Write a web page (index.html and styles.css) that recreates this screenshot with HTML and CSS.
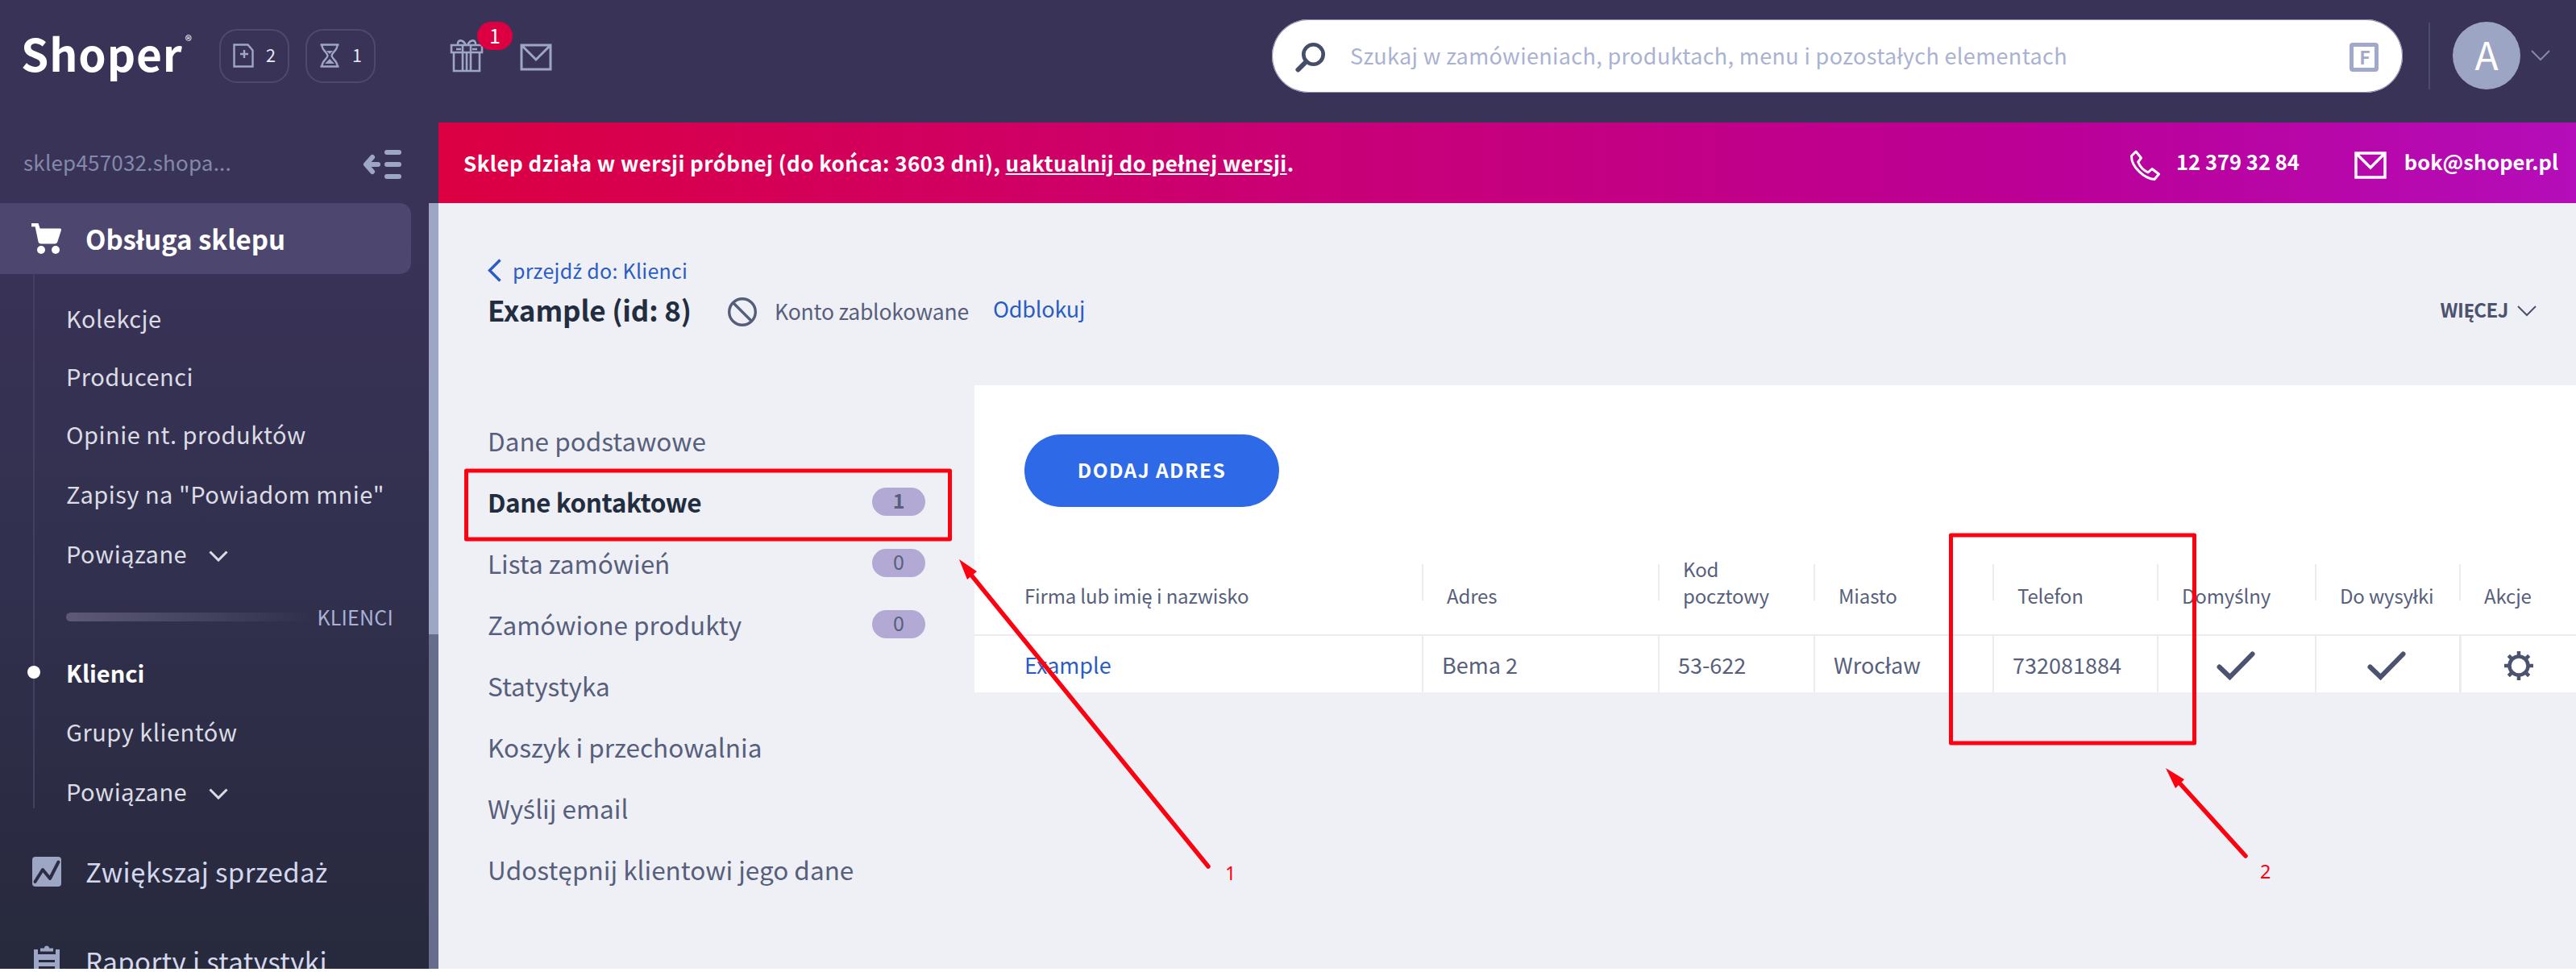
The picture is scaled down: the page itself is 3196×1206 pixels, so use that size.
FILE: index.html
```
<!DOCTYPE html>
<html lang="pl">
<head>
    <meta charset="UTF-8">
    <title>Example (id: 8) - Klienci - Shoper</title>
    <link rel="stylesheet" href="styles.css">
</head>
<body>
    <div class="app">
        <header class="topbar">
            <div class="logo">Shoper<span class="logo-mark">®</span></div>
            <a class="pill pill-orders">
                <svg width="26" height="30" viewBox="0 0 26 30" fill="none" stroke="currentColor" stroke-width="2.4"><path d="M1.5 1.5h17l6 7v20h-23z"/><path d="M14 8v10M9 13h10"/></svg>
                <span>2</span>
            </a>
            <a class="pill pill-pending">
                <svg width="26" height="30" viewBox="0 0 26 30" fill="none" stroke="currentColor" stroke-width="2.4"><path d="M1.5 1.5h23M1.5 28.5h23M3.5 2c0 7 7 9 7 13s-7 6-7 13M22.5 2c0 7-7 9-7 13s7 6 7 13"/><path d="M13 19l6 6H7zM9 9h8l-4 4z" fill="currentColor" stroke="none"/></svg>
                <span>1</span>
            </a>
            <a class="gift">
                <svg width="42" height="42" viewBox="0 0 42 42" fill="none" stroke="currentColor" stroke-width="2.6"><path d="M2 8h38v9H2zM5 17v23h32V17M16 8v32M21 17v23M26 8v32M20 8c-4-8-11-7-10 0M22 8c4-8 11-7 10 0M8 13h6M28 13h6"/></svg>
                <span class="gift-badge">1</span>
            </a>
            <svg class="mail-top" width="40" height="34" viewBox="0 0 40 34" fill="none" stroke="currentColor" stroke-width="3"><path d="M2 2h36v30H2zM3 3l17 17L37 3"/></svg>
            <div class="search">
                <svg width="38" height="38" viewBox="0 0 38 38" fill="none" stroke="#454e68" stroke-width="4.6" stroke-linecap="round"><circle cx="22.5" cy="15.5" r="12.2"/><path d="M13.500 24.500L3.500 34.500" stroke-width="6"/></svg>
                <span class="search-text">Szukaj w zamówieniach, produktach, menu i pozostałych elementach</span>
                <span class="search-key">F</span>
            </div>
            <div class="avatar-box">
                <div class="avatar">A</div>
                <svg width="24" height="14" viewBox="0 0 24 14" fill="none" stroke="#8389ab" stroke-width="2"><path d="M1 1l11 11L23 1"/></svg>
            </div>
        </header>

        <div class="body">
            <aside class="sidebar">
                <nav class="menu">
                    <div class="shop-name">
                        <span>sklep457032.shopa...</span>
                        <svg width="49" height="38" viewBox="0 0 49 38" fill="none" stroke="currentColor" stroke-width="6" stroke-linecap="round" stroke-linejoin="round"><path d="M30 4h15M30 19h15M30 34h15M5 19h14M12 10L4 19l8 9"/></svg>
                    </div>
                    <a class="menu-item active">
                        <svg width="38" height="38" viewBox="0 0 38 38" fill="#fff"><path d="M0 0h8.500l2.200 6.500H35.500q2 0 1.500 2l-4.500 14q-.8 3-3.500 3H12q-3 0-3.600-3L4.600 4.300H0z"/><circle cx="12" cy="33" r="5"/><circle cx="30" cy="33" r="5"/></svg>
                        <span>Obsługa sklepu</span>
                    </a>
                    <div class="submenu">
                        <a>Kolekcje</a>
                        <a>Producenci</a>
                        <a>Opinie nt. produktów</a>
                        <a class="tall">Zapisy na "Powiadom mnie"</a>
                        <a>Powiązane <svg class="chev" width="24" height="14" viewBox="0 0 24 14" fill="none" stroke="currentColor" stroke-width="3"><path d="M1.500 1.500L12 12 22.500 1.500"/></svg></a>
                        <div class="section"><i></i><span>KLIENCI</span></div>
                        <a class="row current">Klienci</a>
                        <a class="row">Grupy klientów</a>
                        <a class="row">Powiązane <svg class="chev" width="24" height="14" viewBox="0 0 24 14" fill="none" stroke="currentColor" stroke-width="3"><path d="M1.500 1.500L12 12 22.500 1.500"/></svg></a>
                    </div>
                    <a class="menu-item">
                        <svg width="38" height="38" viewBox="0 0 38 38"><rect x="1" y="1" width="36" height="37" rx="4" fill="#9ea6c6"/><path d="M4.500 32L14 17l9 11L33.500 7.500" fill="none" stroke="#2c2d45" stroke-width="4" stroke-linecap="round" stroke-linejoin="round"/></svg>
                        <span>Zwiększaj sprzeda<em class="pl">ż</em></span>
                    </a>
                    <a class="menu-item reports">
                        <svg width="38" height="38" viewBox="0 0 38 38" fill="#9ea6c6"><path d="M11 3.500h5a3 3 0 0 1 6 0h5v4H11z"/><path d="M3 5h5v6h22V5h5v33H3zm6 13v3h20v-3zm0 8v3h20v-3z" fill-rule="evenodd"/></svg>
                        <span>Raporty i statystyki</span>
                    </a>
                </nav>
                <div class="scroll"><div class="scroll-thumb"></div></div>
            </aside>

            <main class="content">
                <div class="banner">
                    <span class="banner-text">Sklep działa w wersji próbnej (do końca: 3603 dni), <u>uaktualnij do pełnej wersji</u>.</span>
                    <svg class="phone" width="38" height="38" viewBox="0 0 38 38" fill="none" stroke="#fff" stroke-width="3" stroke-linejoin="round"><path d="M2.500 7.500L8 2l6.500 8-3.800 5c2 5 7 10.500 12.300 13l5-4.500 8.500 6.500-5.500 6.500C19 36 2 21 2.500 7.500z"/></svg>
                    <span class="phone-no">12 379 32 84</span>
                    <svg class="mail" width="40" height="34" viewBox="0 0 40 34" fill="none" stroke="#fff" stroke-width="3.500"><path d="M2 2h36v30H2zM3 3l17 17L37 3"/></svg>
                    <span class="mail-addr">bok@shoper.pl</span>
                </div>

                <div class="page-head">
                    <a class="back">
                        <svg width="17" height="29" viewBox="0 0 17 29" fill="none" stroke="currentColor" stroke-width="3.4"><path d="M15.500 1.500L2.500 14.500l13 13"/></svg>
                        <span>przejd<em class="pl">ź</em> do: Klienci</span>
                    </a>
                    <div class="title-row">
                        <h1>Example (id: 8)</h1>
                        <svg class="ban" width="38" height="38" viewBox="0 0 38 38" fill="none" stroke="#555d7a" stroke-width="3.400"><circle cx="19" cy="19" r="16.300"/><path d="M8 8l22 22"/></svg>
                        <span class="blocked">Konto zablokowane</span>
                        <a class="unlock">Odblokuj</a>
                        <a class="more"><span>WIĘCEJ</span> <svg width="24" height="14" viewBox="0 0 24 14" fill="none" stroke="currentColor" stroke-width="2"><path d="M1 1l11 11L23 1"/></svg></a>
                    </div>
                </div>

                <div class="columns">
                    <ul class="tabs">
                        <li><span>Dane podstawowe</span></li>
                        <li class="selected"><span>Dane kontaktowe</span><b class="count">1</b></li>
                        <li><span>Lista zamówień</span><b class="count">0</b></li>
                        <li><span>Zamówione produkty</span><b class="count">0</b></li>
                        <li><span>Statystyka</span></li>
                        <li><span>Koszyk i przechowalnia</span></li>
                        <li><span>Wy<em class="pl">ś</em>lij email</span></li>
                        <li><span>Udostępnij klientowi jego dane</span></li>
                    </ul>
                    <section class="panel">
                        <button class="add">DODAJ ADRES</button>
                        <table class="addresses">
                            <colgroup>
                                <col class="c-name"><col class="c-addr"><col class="c-zip"><col class="c-city">
                                <col class="c-phone"><col class="c-def"><col class="c-ship"><col class="c-act">
                            </colgroup>
                            <thead>
                                <tr>
                                    <th>Firma lub imię i nazwisko</th>
                                    <th>Adres</th>
                                    <th>Kod<br>pocztowy</th>
                                    <th>Miasto</th>
                                    <th>Telefon</th>
                                    <th>Domy<em class="pl">ś</em>lny</th>
                                    <th>Do wysyłki</th>
                                    <th>Akcje</th>
                                </tr>
                            </thead>
                            <tbody>
                                <tr>
                                    <td><a>Example</a></td>
                                    <td>Bema 2</td>
                                    <td>53-622</td>
                                    <td>Wrocław</td>
                                    <td>732081884</td>
                                    <td class="icon"><svg width="50" height="38" viewBox="0 0 50 38" fill="none" stroke="currentColor" stroke-width="6" stroke-linecap="round"><path d="M4.500 20.500L17.500 33 45.500 4.500"/></svg></td>
                                    <td class="icon ship"><svg width="50" height="38" viewBox="0 0 50 38" fill="none" stroke="currentColor" stroke-width="6" stroke-linecap="round"><path d="M4.500 20.500L17.500 33 45.500 4.500"/></svg></td>
                                    <td class="icon gear"><svg width="38" height="38" viewBox="0 0 38 38" fill="none" stroke="currentColor" stroke-width="4.500"><circle cx="19" cy="19" r="11.500"/><path d="M19 1v6M19 31v6M1 19h6M31 19h6M6.300 6.300l4 4M27.700 27.700l4 4M31.700 6.300l-4 4M10.300 27.700l-4 4"/></svg></td>
                                </tr>
                            </tbody>
                        </table>
                    </section>
                </div>
            </main>
        </div>

        <!-- callouts over the page -->
        <svg class="callouts" width="3196" height="1202" viewBox="0 0 3196 1202">
            <g fill="none" stroke="#fe0010" stroke-width="5" stroke-linejoin="round">
                <rect x="578.500" y="584" width="600" height="85"/>
                <rect x="2420.500" y="664" width="302" height="258"/>
                <path d="M1203 711L1499 1075M2701 968L2786 1062" stroke-width="5.500" stroke-linecap="round"/>
            </g>
            <path d="M1190 694L1212 709 1206 714 1200 719zM2687 953L2710 967 2699 978z" fill="#fe0010"/>
            <text x="1520" y="1092">1</text>
            <text x="2804" y="1090">2</text>
        </svg>
    </div>
</body>
</html>
```

FILE: styles.css
```
* {
    box-sizing: border-box;
}

body {
    margin: 0;
    background-color: #fff;
    font-family: "Noto Sans CJK JP", "Noto Sans", sans-serif;
    font-size: 27px;
    color: #575f7c;
}

svg {
    display: block;
    flex: none;
}

/* accented letters missing from the main font */
.pl {
    font-family: "Noto Sans", sans-serif;
    font-style: normal;
    line-height: 0;
}

.app {
    position: relative;
    display: flex;
    flex-direction: column;
    width: 3196px;
    height: 1202px;
    overflow: hidden;
    background-color: #eff0f6;
    white-space: nowrap;
}

/* top bar */
.topbar {
    flex: none;
    display: flex;
    align-items: center;
    height: 152px;
    padding: 0 32px 14px 26px;
    background-color: #3a3358;
    color: #9ea6c6;
}

.logo {
    display: flex;
    width: 246px;
    font-size: 55px;
    line-height: 80px;
    font-weight: bold;
    letter-spacing: 0.9px;
    color: #fff;
    margin-top: -8px;
}

.logo-mark {
    font-size: 17px;
    line-height: 50px;
    font-weight: normal;
    margin-left: 3px;
}

.pill {
    display: flex;
    align-items: center;
    gap: 15px;
    width: 87px;
    height: 67px;
    margin-right: 20px;
    padding-left: 15px;
    border: 2px solid #4f4970;
    border-radius: 22px;
    font-size: 21.5px;
}

.pill span {
    line-height: 30px;
    margin-top: -3px;
    color: #e9eaf2;
}

.gift {
    position: relative;
    margin-left: 72px;
}

.gift-badge {
    position: absolute;
    left: 34px;
    top: -21px;
    width: 44px;
    height: 35px;
    border-radius: 18px;
    background-color: #dc0042;
    color: #fff;
    font-size: 25px;
    line-height: 32px;
    text-align: center;
}

.mail-top {
    margin-left: 45px;
    margin-top: 4px;
}

.search {
    display: flex;
    align-items: center;
    width: 1403px;
    height: 91px;
    margin-left: auto;
    padding: 0 30px 0 29px;
    border-radius: 46px;
    background-color: #fff;
    box-shadow: 0 0 0 1px #8a8fb0 inset;
}

.search svg {
    margin-top: 4px;
}

.search-text {
    flex: 1;
    margin-left: 30px;
    line-height: 40px;
    font-size: 27px;
    letter-spacing: 0.35px;
    color: #aab2d2;
}

.search-key {
    width: 36px;
    height: 36px;
    margin-top: 4px;
    border: 5px solid #a1a9ca;
    border-radius: 4px;
    font-size: 23px;
    font-weight: bold;
    line-height: 25px;
    text-align: center;
    padding-left: 2px;
    color: #a1a9ca;
}

.avatar-box {
    display: flex;
    align-items: center;
    height: 83px;
    margin-left: 32px;
    padding-left: 28px;
    border-left: 2px solid #4a4b70;
}

.avatar {
    width: 84px;
    height: 84px;
    margin-right: 13px;
    border-radius: 50%;
    background-color: #9da5c4;
    color: #fff;
    font-size: 48px;
    line-height: 78px;
    text-align: center;
}

.body {
    flex: 1;
    display: flex;
    min-height: 0;
}

/* sidebar */
.sidebar {
    flex: none;
    display: flex;
    width: 544px;
    background: linear-gradient(#3a3358 0, #3a3358 100px, #31304e 570px, #27293c 1050px);
}

.menu {
    width: 532px;
    overflow: hidden;
}

.scroll {
    width: 12px;
    margin-top: 100px;
    background-color: #666e8c;
}

.scroll-thumb {
    height: 535px;
    background-color: #9ea6c6;
}

.shop-name {
    display: flex;
    justify-content: space-between;
    align-items: center;
    height: 100px;
    padding: 4px 33px 0 29px;
    font-size: 26px;
    letter-spacing: 0.2px;
    color: #8389ab;
}

.shop-name span {
    line-height: 40px;
    margin-top: -6px;
}

.shop-name svg {
    color: #9ea6c6;
}

.menu-item {
    display: flex;
    align-items: center;
    height: 88px;
    padding-left: 39px;
    font-size: 33px;
    letter-spacing: 0.4px;
    color: #d4d8ee;
}

.menu-item span {
    line-height: 60px;
    margin: -1px 0 0 29px;
}

.menu-item.active {
    width: 510px;
    border-radius: 0 14px 14px 0;
    background-color: #4d476f;
    color: #fff;
    font-weight: bold;
    letter-spacing: 0;
}

.menu-item.reports {
    margin-top: 23px;
}

.submenu {
    display: flex;
    flex-direction: column;
    height: 663px;
    margin: 0 0 34px 41px;
    padding: 18px 44px 0 39px;
    border-left: 2px solid #443f63;
    font-size: 29px;
    letter-spacing: 0.5px;
    color: #dcdce4;
}

.submenu a {
    display: flex;
    align-items: center;
    flex: none;
    height: 72px;
    line-height: 72px;
}

.submenu a.tall {
    height: 76px;
}

.submenu a.row {
    height: 73.5px;
}

.submenu .chev {
    margin: 8px 0 0 27px;
}

.submenu .current {
    color: #fff;
    font-weight: bold;
    letter-spacing: 0;
}

.submenu .current::before {
    content: "";
    width: 16px;
    height: 16px;
    margin: 0 32px 0 -48px;
    border-radius: 50%;
    background-color: #fff;
}

.section {
    flex: none;
    display: flex;
    align-items: center;
    height: 75px;
    padding-top: 11px;
    font-size: 25px;
    letter-spacing: 0.2px;
    color: #aab1d6;
}

.section i {
    flex: 1;
    height: 11px;
    margin-right: 6px;
    border-radius: 6px;
    background: linear-gradient(90deg, #5d5976, rgba(93, 89, 118, 0));
}

/* content */
.content {
    flex: 1;
    min-width: 0;
}

.banner {
    display: flex;
    align-items: center;
    height: 100px;
    padding: 0 22px 0 31px;
    background: linear-gradient(90deg, #dc0042, #c90076 41%, #bb0098 76%, #b40db9);
    color: #fff;
    font-size: 25.5px;
    font-weight: bold;
    line-height: 40px;
}

.banner-text {
    flex: 1;
    font-size: 26px;
    letter-spacing: 0.42px;
}

.phone {
    margin: 6px 20px 0 0;
}

.mail {
    margin: 6px 22px 0 68px;
}

.phone-no,
.mail-addr {
    margin-top: -5px;
}

.page-head {
    height: 226px;
    padding: 63px 49px 0 61px;
}

.back {
    display: flex;
    align-items: center;
    gap: 14px;
    height: 39px;
    padding-top: 2px;
    font-size: 25px;
    line-height: 39px;
    letter-spacing: 0.25px;
    color: #2a5cc4;
}

.title-row {
    display: flex;
    align-items: center;
    height: 60px;
    line-height: 60px;
}

h1 {
    margin: 0;
    width: 297px;
    font-size: 35px;
    letter-spacing: -0.15px;
    color: #222d3f;
}

.ban {
    margin-top: 6px;
}

.blocked {
    margin: 4px 0 0 21px;
    width: 271px;
    font-size: 26.5px;
    letter-spacing: -0.2px;
}

.unlock {
    margin-top: -3px;
    letter-spacing: -0.2px;
    color: #2a5cc4;
}

.more {
    display: flex;
    align-items: center;
    gap: 11px;
    margin-left: auto;
    font-size: 24px;
    font-weight: bold;
    letter-spacing: -0.5px;
    color: #4b5370;
}

.more svg {
    margin-top: 4px;
}

.columns {
    display: flex;
    align-items: flex-start;
}

.tabs {
    flex: none;
    width: 665px;
    margin: 0;
    padding: 30px 61px 0 61px;
    list-style: none;
    font-size: 31.5px;
    line-height: 76px;
}

.tabs li {
    display: flex;
    justify-content: space-between;
    align-items: center;
    height: 76px;
}

.tabs .selected {
    color: #222d3f;
    font-weight: bold;
    letter-spacing: -0.4px;
}

.count {
    width: 66px;
    height: 35px;
    margin-top: 1px;
    border-radius: 18px;
    background-color: #b2a9d5;
    color: #575f7c;
    font-size: 25px;
    font-weight: normal;
    line-height: 31px;
    text-align: center;
}

.selected .count {
    font-weight: bold;
}

.panel {
    flex: 1;
    min-width: 0;
    padding-top: 61px;
    background-color: #fff;
}

.add {
    display: block;
    width: 316px;
    height: 90px;
    margin-left: 62px;
    padding: 0 0 3px;
    border: 0;
    border-radius: 45px;
    background-color: #2e6ae7;
    color: #fff;
    font-family: inherit;
    font-size: 24.5px;
    font-weight: bold;
    letter-spacing: 1.4px;
}

.addresses {
    width: 100%;
    table-layout: fixed;
    border-spacing: 0;
}

.c-name { width: 555px; }
.c-addr { width: 293px; }
.c-zip { width: 193px; }
.c-city { width: 222px; }
.c-phone { width: 204px; }
.c-def { width: 196px; }
.c-ship { width: 179px; }
.c-act { width: 145px; }

.addresses th {
    height: 160px;
    padding: 0 0 32px 31px;
    border-bottom: 2px solid #ececee;
    background: linear-gradient(#ececee, #ececee) no-repeat 0 71px / 2px 45px;
    font-size: 24px;
    font-weight: normal;
    line-height: 33px;
    letter-spacing: -0.15px;
    text-align: left;
    vertical-align: bottom;
}

.addresses td {
    height: 70px;
    padding: 1px 0 0 23px;
    border-left: 2px solid #ececee;
    line-height: 69px;
}

.addresses th:first-child {
    padding-left: 62px;
    background: none;
}

.addresses td:first-child {
    padding-left: 62px;
    border-left: 0;
    color: #2a5cc4;
}

.addresses .icon {
    padding-top: 3px;
    padding-left: 71px;
    color: #4b5370;
}

.addresses .ship {
    padding-left: 62px;
}

.addresses .gear {
    padding-left: 52px;
    border-left-width: 3px;
}

.callouts {
    position: absolute;
    left: 0;
    top: 0;
}

.callouts text {
    font-family: "Noto Sans", sans-serif;
    font-size: 23.5px;
    fill: #fe0010;
}
```
